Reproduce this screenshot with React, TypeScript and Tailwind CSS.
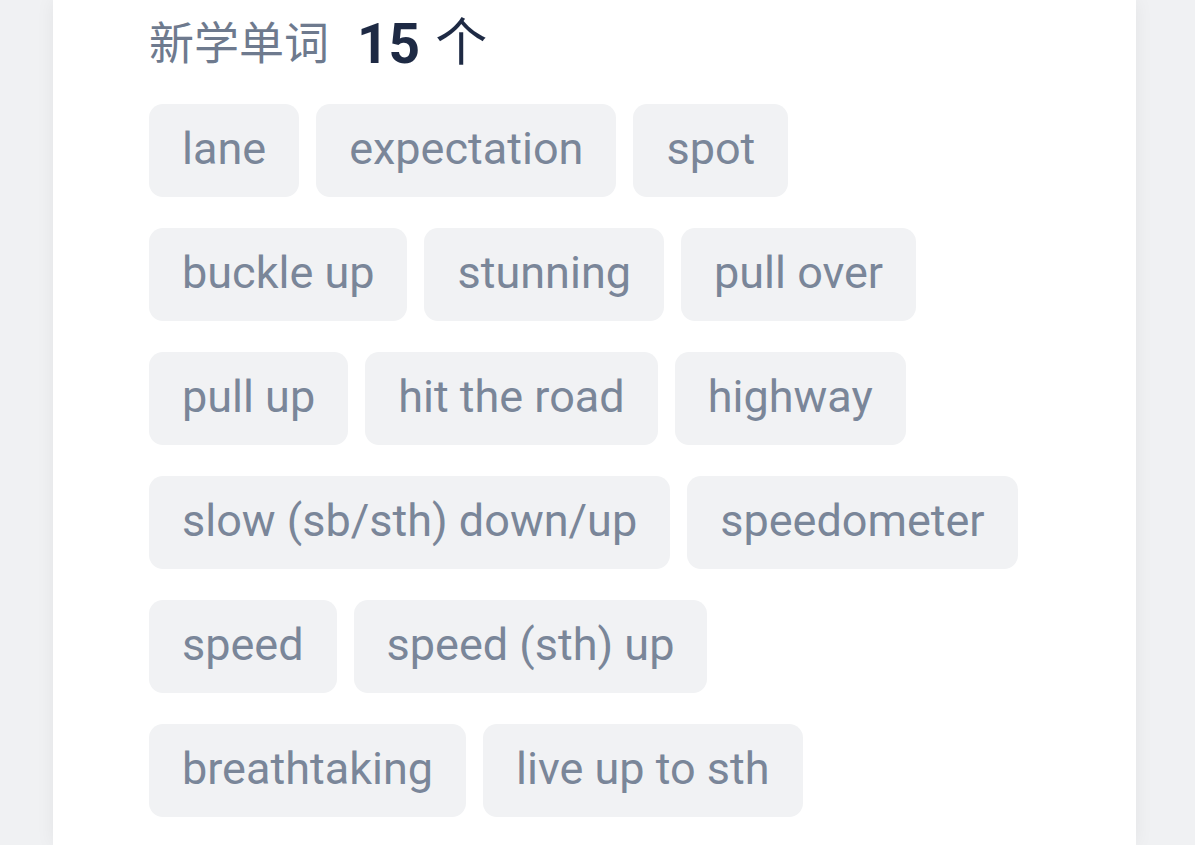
const words = [
  'lane',
  'expectation',
  'spot',
  'buckle up',
  'stunning',
  'pull over',
  'pull up',
  'hit the road',
  'highway',
  'slow (sb/sth) down/up',
  'speedometer',
  'speed',
  'speed (sth) up',
  'breathtaking',
  'live up to sth',
];

export default function App() {
  return (
    <div className="h-[845px] overflow-hidden bg-[#f0f1f3] pl-[53px] pr-[59px] font-['Roboto','Noto_Sans_CJK_SC',sans-serif]">
      <div className="h-full bg-white px-[96px] shadow-[0_0_18px_rgba(0,0,0,0.06)]">
        <div className="flex h-[90px] items-center pb-[2px]">
          <span className="text-[45px] leading-none text-[#6e7a8e]">新学单词</span>
          <span className="ml-[28px] text-[55px] font-bold leading-none text-[#1e2a44]">15</span>
          <span className="ml-[15px] text-[52px] leading-none text-[#1e2a44]">个</span>
        </div>
        <div className="mt-[14px] flex flex-wrap gap-x-[17px] gap-y-[31px]">
          {words.map((w) => (
            <span
              key={w}
              className="flex h-[93px] items-center rounded-[14px] bg-[#f1f2f4] px-[33px] pb-[4px] text-[45px] leading-none text-[#7a8699]"
            >
              {w}
            </span>
          ))}
        </div>
      </div>
    </div>
  );
}
